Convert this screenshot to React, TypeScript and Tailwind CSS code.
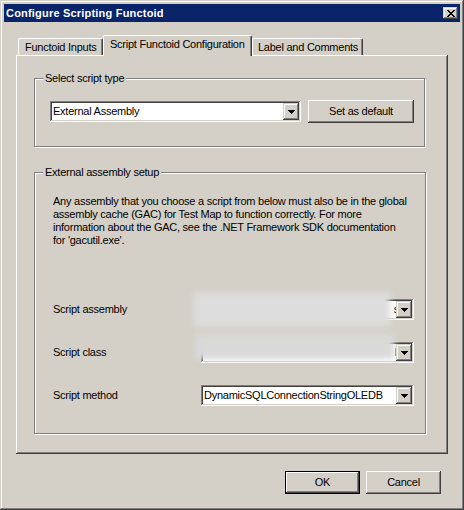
import React from "react";

const RAISED =
  "shadow-[inset_-1px_-1px_#404040,inset_1px_1px_#ffffff,inset_-2px_-2px_#808080,inset_2px_2px_#d4d0c8]";
const RAISED2 =
  "shadow-[inset_-1px_-1px_#404040,inset_1px_1px_#d4d0c8,inset_-2px_-2px_#808080,inset_2px_2px_#ffffff]";
const SUNKEN =
  "shadow-[inset_-1px_-1px_#ffffff,inset_1px_1px_#808080,inset_-2px_-2px_#d4d0c8,inset_2px_2px_#404040]";
const ETCHED = "border border-[#808080] shadow-[1px_1px_0_#ffffff,inset_1px_1px_0_#ffffff]";

function Arrow() {
  return (
    <svg width="7" height="4" viewBox="0 0 7 4" shapeRendering="crispEdges">
      <rect x="0" y="0" width="7" height="1" fill="#000" />
      <rect x="1" y="1" width="5" height="1" fill="#000" />
      <rect x="2" y="2" width="3" height="1" fill="#000" />
      <rect x="3" y="3" width="1" height="1" fill="#000" />
    </svg>
  );
}

function DropBtn() {
  return (
    <div className={`w-[16px] h-[17px] bg-[#d4d0c8] flex items-center justify-center shrink-0 ${RAISED2}`}>
      <Arrow />
    </div>
  );
}

function Combo({
  width,
  children,
  blur,
}: {
  width: string;
  children?: React.ReactNode;
  blur?: React.ReactNode;
}) {
  return (
    <div className={`relative h-[21px] ${width} bg-white p-[2px] flex ${SUNKEN}`}>
      <div className="flex-1 overflow-hidden whitespace-nowrap leading-[17px] pl-[1px] flex">{children}</div>
      <DropBtn />
      {blur}
    </div>
  );
}

function Button({ w, children, def }: { w: string; children: React.ReactNode; def?: boolean }) {
  if (def) {
    return (
      <div className={`${w} h-[23px] border border-black`}>
        <div className={`w-full h-full bg-[#d4d0c8] flex items-center justify-center ${RAISED}`}>{children}</div>
      </div>
    );
  }
  return (
    <div className={`${w} h-[23px] bg-[#d4d0c8] flex items-center justify-center ${RAISED}`}>{children}</div>
  );
}

export default function App() {
  return (
    <div
      className={`w-[464px] h-[510px] bg-[#d4d0c8] p-[4px] flex flex-col text-[11px] tracking-[-0.25px] text-black font-['Liberation_Sans',Arial,sans-serif] ${RAISED2}`}
    >
      {/* Title bar */}
      <div className="h-[18px] bg-[#0a246a] flex items-center justify-between shrink-0">
        <span className="pl-[2px] text-white font-bold text-[11px] tracking-[0.2px] leading-[18px]">
          Configure Scripting Functoid
        </span>
        <div className={`w-[15px] h-[12px] mr-[2px] bg-[#d4d0c8] flex items-center justify-center ${RAISED2}`}>
          <svg width="8" height="7" viewBox="0 0 8 7" shapeRendering="crispEdges">
            <path d="M0 0h2v1h-2zM6 0h2v1h-2zM1 1h2v1h-2zM5 1h2v1h-2zM2 2h4v1h-4zM3 3h2v1h-2zM2 4h4v1h-4zM1 5h2v1h-2zM5 5h2v1h-2zM0 6h2v1h-2zM6 6h2v1h-2z" fill="#000" />
          </svg>
        </div>
      </div>

      {/* Tabs */}
      <div className="flex items-end h-[20px] mt-[13px] ml-[14px]">
        <div className="w-[85px] h-[17px] border-l border-t border-white border-r border-r-[#404040] rounded-t-[2px] shadow-[inset_-1px_0_#808080] pl-[6px] pt-[2px] leading-[13px] whitespace-nowrap">
          Functoid Inputs
        </div>
        <div className="relative z-10 w-[149px] h-[21px] -mb-[1px] bg-[#d4d0c8] border-l border-t border-white border-r border-r-[#404040] rounded-t-[2px] shadow-[inset_-1px_0_#808080] pl-[6px] pt-[2px] leading-[13px] whitespace-nowrap">
          Script Functoid Configuration
        </div>
        <div className="w-[111px] h-[17px] border-l border-t border-white border-r border-r-[#404040] rounded-t-[2px] shadow-[inset_-1px_0_#808080] pl-[5px] pt-[2px] leading-[13px] whitespace-nowrap">
          Label and Comments
        </div>
      </div>

      {/* Panel */}
      <div className={`ml-[12px] w-[432px] h-[399px] shrink-0 pl-[18px] pt-[17px] ${RAISED}`}>
        <fieldset className={`w-[391px] ${ETCHED}`}>
          <legend className="ml-[8px] px-[2px] leading-[13px] bg-[#d4d0c8]">Select script type</legend>
          <div className="pl-[15px] pt-[15px] pb-[23px] flex items-center gap-[7px]">
            <Combo width="w-[251px]">External Assembly</Combo>
            <Button w="w-[106px]">Set as default</Button>
          </div>
        </fieldset>

        <fieldset className={`w-[392px] mt-[19px] ${ETCHED}`}>
          <legend className="ml-[8px] px-[2px] leading-[13px] bg-[#d4d0c8]">External assembly setup</legend>
          <div className="pl-[18px] pt-[16px] pb-[27px] flex flex-col">
            <p className="leading-[13px] whitespace-nowrap">
              Any assembly that you choose a script from below must also be in the global
              <br />
              assembly cache (GAC) for Test Map to function correctly. For more
              <br />
              information about the GAC, see the .NET Framework SDK documentation
              <br />
              for 'gacutil.exe'.
            </p>
            <div className="mt-[52px] flex items-center h-[21px]">
              <div className="w-[148px]">Script assembly</div>
              <Combo
                width="w-[213px]"
                blur={
                  <div className="absolute left-[-7px] top-[-7px] w-[196px] h-[35px] bg-[#dddddd] blur-[3px]" />
                }
              >
                <span className="ml-auto -mr-[3px]">s</span>
              </Combo>
            </div>
            <div className="mt-[22px] flex items-center h-[21px]">
              <div className="w-[148px]">Script class</div>
              <Combo
                width="w-[213px]"
                blur={
                  <div className="absolute left-[-6px] top-[-8px] w-[199px] h-[25px] bg-[#d9d9d9] blur-[3px]" />
                }
              >
                <span className="ml-auto -mr-[1px]">l</span>
              </Combo>
            </div>
            <div className="mt-[22px] flex items-center h-[21px]">
              <div className="w-[148px]">Script method</div>
              <Combo width="w-[213px]">DynamicSQLConnectionStringOLEDB</Combo>
            </div>
          </div>
        </fieldset>
      </div>

      {/* Bottom buttons */}
      <div className="mt-[17px] flex justify-end gap-[6px] mr-[19px]">
        <Button w="w-[75px]" def>
          OK
        </Button>
        <Button w="w-[75px]">Cancel</Button>
      </div>
    </div>
  );
}
